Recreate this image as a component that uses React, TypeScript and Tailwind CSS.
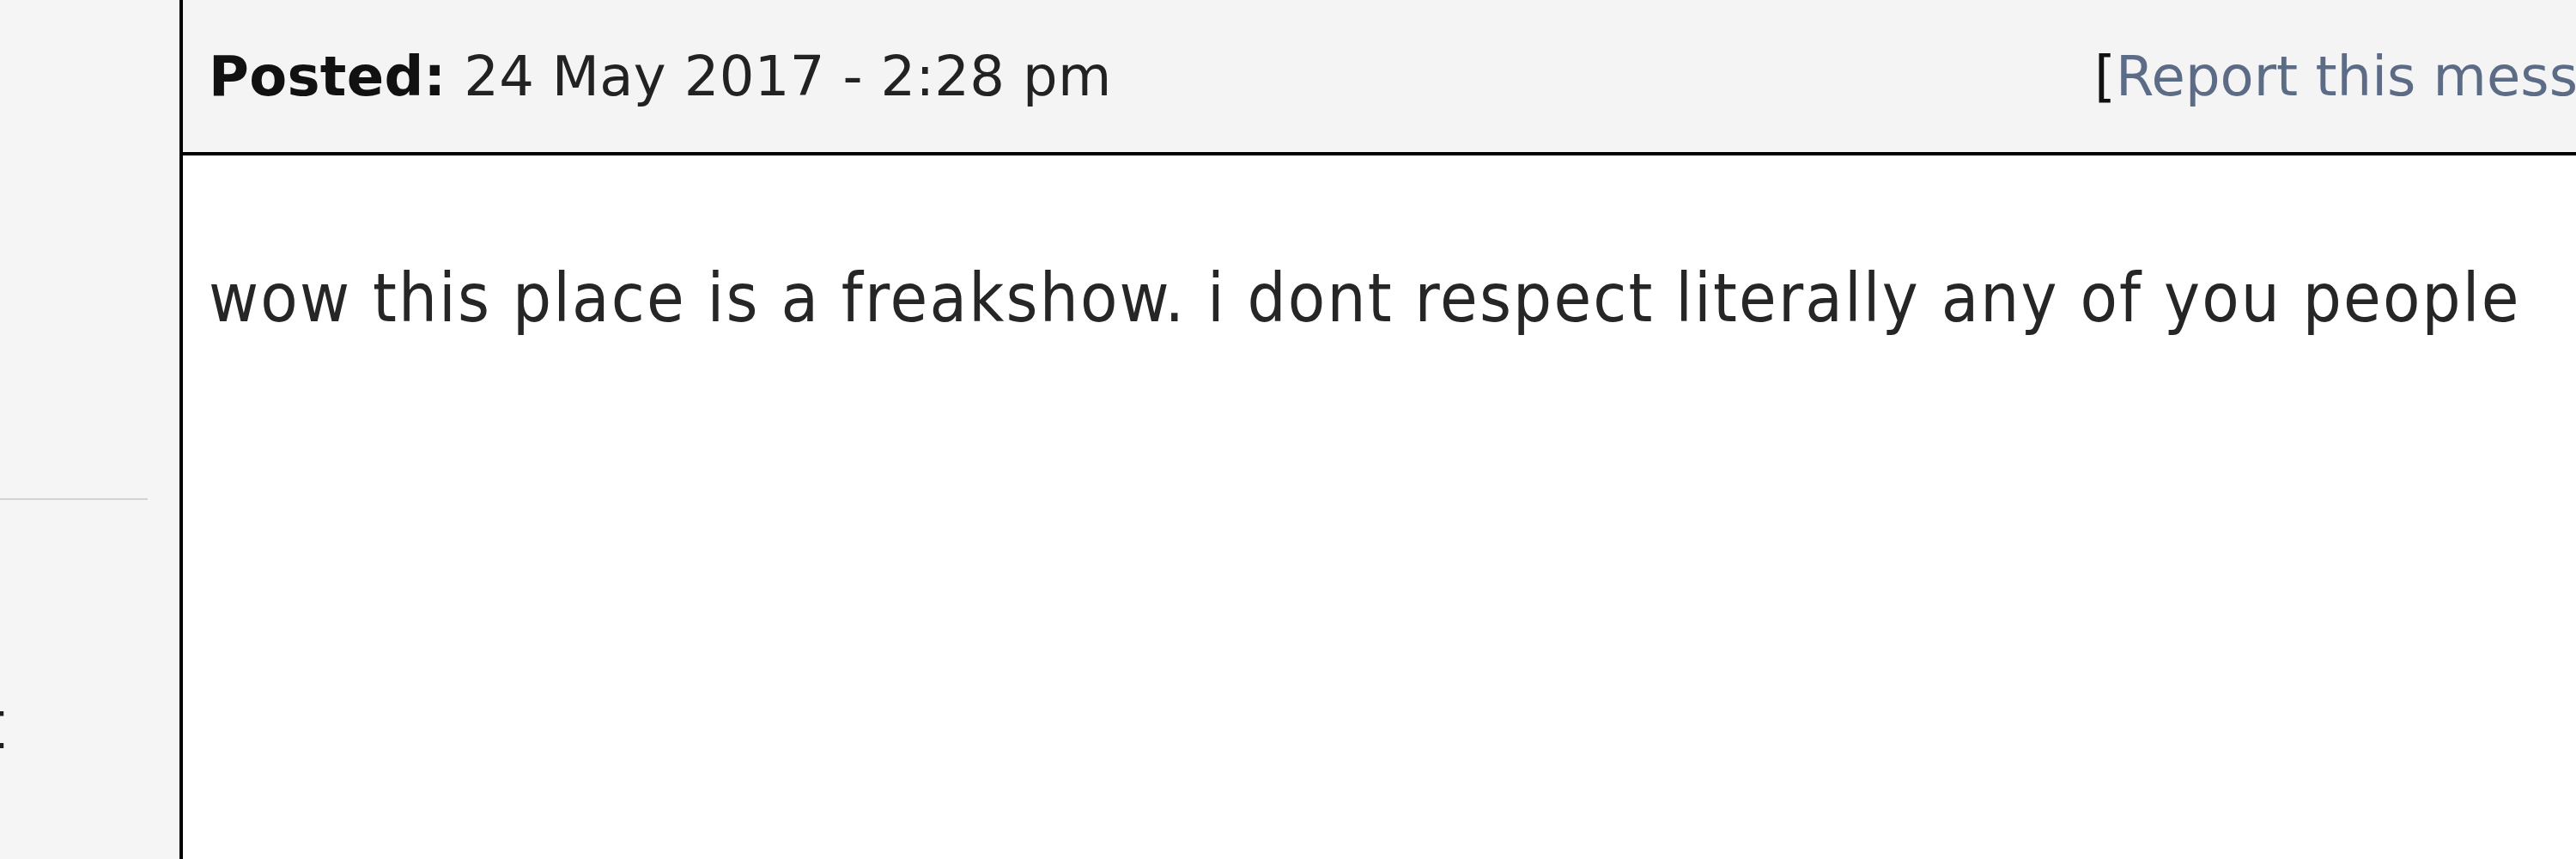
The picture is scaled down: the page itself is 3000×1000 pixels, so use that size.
export default function App() {
  const condensed = { fontFamily: '"DejaVu Sans Condensed", "DejaVu Sans", Tahoma, Verdana, sans-serif' };
  const wide = { fontFamily: '"DejaVu Sans", Tahoma, Verdana, sans-serif' };

  return (
    <div className="flex w-[3000px] h-[1000px] overflow-hidden bg-white" style={condensed}>
      {/* --- left author column (mostly cut off) --- */}
      <aside className="w-[209px] shrink-0 bg-[#f5f5f5] flex flex-col">
        <div className="h-[580px]" />
        <div className="h-[2px] w-[172px] bg-[#d4d4d4]" />
        <div className="mt-[223px] -ml-[22px] text-[79px] leading-none text-[#1e1e1e]">t</div>
      </aside>

      {/* --- post --- */}
      <main className="flex-1 min-w-0 flex flex-col border-l-4 border-black">
        <header
          className="h-[181px] shrink-0 bg-[#f4f4f4] border-b-4 border-black grid grid-cols-[2196px_1fr] items-center pl-[30px] overflow-hidden"
          style={wide}
        >
          <p className="text-[64px] leading-none tracking-[0.3px] text-[#222] whitespace-nowrap">
            <span className="font-bold text-[#111]">Posted:</span> 24 May 2017 - 2:28 pm
          </p>
          <p className="text-[64px] leading-none whitespace-nowrap">
            <span className="text-[#111]">[</span>
            <a className="text-[#5d6c86]">Report this message</a>
            <span className="text-[#111]">]</span>
          </p>
        </header>

        <div className="flex-1 bg-white pl-[30px] pt-[127px]">
          <p className="text-[79px] leading-none tracking-[2.15px] text-[#262626] whitespace-nowrap">
            wow this place is a freakshow. i dont respect literally any of you people
          </p>
        </div>
      </main>
    </div>
  );
}
